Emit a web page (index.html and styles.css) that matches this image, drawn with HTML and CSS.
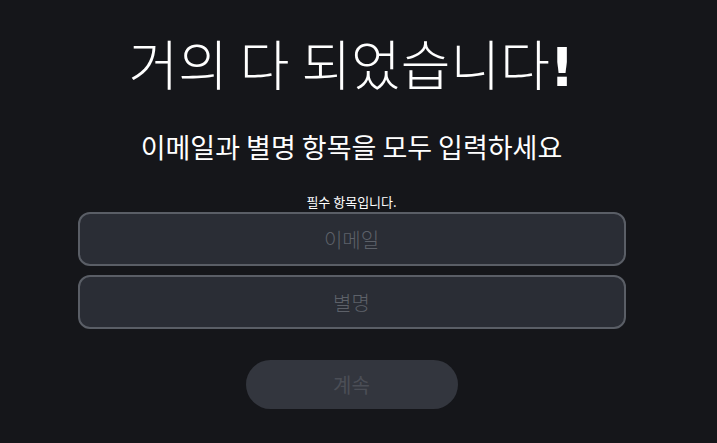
FILE: index.html
```html
<!DOCTYPE html>
<html>
<head>
    <title>거의 다 되었습니다</title>
    <link rel="stylesheet" href="styles.css">
</head>
<body>
    <div class="signup">
        <h1>거의 다 되었습니다<span class="bang">!</span></h1>
        <h2>이메일과 별명 항목을 모두 입력하세요</h2>

        <!-- Form fields -->
        <form class="signup-form">
            <p class="hint">필수 항목입니다.</p>
            <input type="email" placeholder="이메일">
            <input type="text" placeholder="별명">
            <button type="button" disabled>계속</button>
        </form>
    </div>
</body>
</html>
```

FILE: styles.css
```css
/* Global CSS */
* {
    box-sizing: border-box;
}

body {
    margin: 0;
    padding: 0;
    height: 100vh;
    background-color: #15161a;
    font-family: "Noto Sans CJK KR", "Noto Sans", sans-serif;
    color: #fff;
    overflow: hidden;
}

/* Layout CSS */
.signup {
    width: 703px;
    padding-top: 27px;
    text-align: center;
}

.signup h1 {
    margin: 0;
    font-size: 54px;
    font-weight: 300;
    line-height: 72px;
}

.signup h1 .bang {
    font-family: "DejaVu Sans", sans-serif;
    font-weight: bold;
}

.signup h2 {
    margin: 23px 0 0;
    font-size: 27px;
    font-weight: 400;
    line-height: 40px;
}

/* Form CSS */
.signup-form {
    display: flex;
    flex-direction: column;
    align-items: center;
    gap: 9px;
    margin-top: 26px;
}

.hint {
    margin: 0 0 -8px;
    font-size: 13px;
    line-height: 18px;
}

.signup-form input {
    width: 548px;
    height: 54px;
    padding: 0 16px;
    border: 2px solid #5a5e66;
    border-radius: 12px;
    background-color: #2a2d35;
    color: #fff;
    font-family: inherit;
    font-size: 20px;
    font-weight: 300;
    text-align: center;
}

.signup-form input::placeholder {
    color: #5d6169;
}

.signup-form button {
    width: 212px;
    height: 49px;
    margin-top: 22px;
    border: none;
    border-radius: 25px;
    background-color: #33363e;
    color: #4b4e56;
    font-family: inherit;
    font-size: 20px;
}
```
